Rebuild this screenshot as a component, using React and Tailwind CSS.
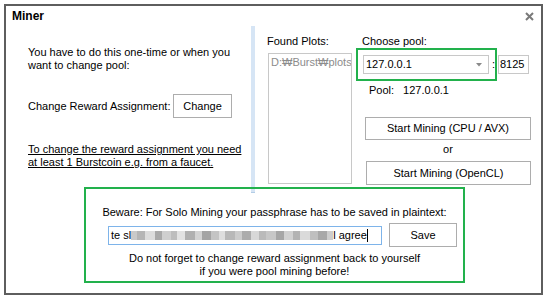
const blocks = [
  [6, "#c9c9c9"], [8, "#b5b5b5"], [10, "#dcdcdc"], [7, "#a9a9a9"], [9, "#cfcfcf"],
  [6, "#bdbdbd"], [8, "#e2e2e2"], [10, "#b0b0b0"], [7, "#d3d3d3"], [9, "#a4a4a4"],
  [8, "#c4c4c4"], [6, "#dedede"], [10, "#b8b8b8"], [7, "#cccccc"], [9, "#acacac"],
  [8, "#d8d8d8"], [7, "#bababa"], [10, "#c7c7c7"], [8, "#a6a6a6"], [9, "#d1d1d1"],
  [7, "#b3b3b3"], [10, "#dadada"], [8, "#bfbfbf"], [9, "#a8a8a8"], [6, "#cdcdcd"],
];

function Btn({ children, className }) {
  return (
    <div className={"flex items-center justify-center border border-[#adadad] bg-white " + className}>
      {children}
    </div>
  );
}

export default function App() {
  return (
    <div className="w-[546px] h-[298px] bg-white pl-[4px] pt-[4px] text-[11px] leading-[13px] text-black font-['Liberation_Sans',sans-serif]">
      <div className="w-[539px] h-[291px] border-2 border-[#5e5e5e] flex flex-col">
        {/* title */}
        <div className="h-[20px] flex items-center justify-between pl-[6px] pr-[7px]">
          <span className="font-bold text-[12px]">Miner</span>
          <svg width="9" height="9" viewBox="0 0 9 9">
            <path d="M1 1 L8 8 M8 1 L1 8" stroke="#7a7a7a" strokeWidth="2" />
          </svg>
        </div>

        {/* top section */}
        <div className="h-[161px] flex items-start">
          {/* left */}
          <div className="w-[245px] pl-[22px] pt-[20px]">
            <p>
              You have to do this one-time or when you
              <br />
              want to change pool:
            </p>
            <div className="mt-[22px] flex items-center h-[24px]">
              <span className="w-[145px]">Change Reward Assignment:</span>
              <Btn className="w-[59px] h-[24px]">Change</Btn>
            </div>
            <p className="mt-[25px] underline">
              To change the reward assignment you need
              <br />
              at least 1 Burstcoin e.g. from a faucet.
            </p>
          </div>

          {/* divider */}
          <div className="w-[4px] h-[167px] bg-[#d6e5f5] border-b border-[#b3cde6]" />

          {/* right */}
          <div className="flex items-start">
            <div className="ml-[12px] pt-[9px]">
              <div>Found Plots:</div>
              <div className="ml-[1px] mt-[5px] w-[84px] h-[131px] border border-[#c8c8c8] overflow-hidden whitespace-nowrap text-[#8c8c8c] pl-[2px] pt-[2px]">
                D:₩Burst₩plots
              </div>
            </div>

            <div className="ml-[4px] pt-[9px]">
              <div className="pl-[6px]">Choose pool:</div>
              <div className="flex items-center">
                <div className="w-[141px] h-[33px] border-2 border-[#22b14c] flex items-center pl-[5px]">
                  <div className="w-[126px] h-[19px] border border-[#c8c8c8] flex items-center justify-between pl-[2px] pr-[6px]">
                    <span>127.0.0.1</span>
                    <svg width="6" height="4" viewBox="0 0 6 4">
                      <path d="M0 0 L6 0 L3 3.5 Z" fill="#8a8a8a" />
                    </svg>
                  </div>
                  <span className="ml-[3px]">:</span>
                </div>
                <div className="ml-[1px] w-[31px] h-[19px] border border-[#c8c8c8] flex items-center pl-[1px]">
                  8125
                </div>
              </div>
              <div className="mt-[3px] pl-[13px] flex">
                <span>Pool:</span>
                <span className="ml-[9px]">127.0.0.1</span>
              </div>
              <Btn className="mt-[20px] ml-[9px] w-[166px] h-[23px]">Start Mining (CPU / AVX)</Btn>
              <div className="mt-[3px] ml-[9px] w-[166px] text-center">or</div>
              <Btn className="mt-[5px] ml-[10px] w-[165px] h-[24px]">Start Mining (OpenCL)</Btn>
            </div>
          </div>
        </div>

        {/* bottom green box */}
        <div className="ml-[78px] w-[381px] h-[96px] border-2 border-[#22b14c] flex flex-col items-center pt-[17px]">
          <div className="text-center">Beware: For Solo Mining your passphrase has to be saved in plaintext:</div>
          <div className="mt-[4px] self-start pl-[22px] flex items-center">
            <div className="w-[274px] h-[19px] border border-[#7eb4ea] flex items-center pl-[2px] whitespace-nowrap overflow-hidden">
              <span>te sl</span>
              <div className="flex items-center h-[9px]">
                {blocks.map(([w, c], i) => (
                  <div key={i} className="h-[9px]" style={{ width: w, background: c }} />
                ))}
              </div>
              <span>l agree</span>
              <div className="w-[1px] h-[13px] bg-black" />
            </div>
            <Btn className="ml-[7px] w-[68px] h-[24px]">Save</Btn>
          </div>
          <div className="mt-[5px] text-center">
            Do not forget to change reward assignment back to yourself
            <br />
            if you were pool mining before!
          </div>
        </div>
      </div>
    </div>
  );
}
